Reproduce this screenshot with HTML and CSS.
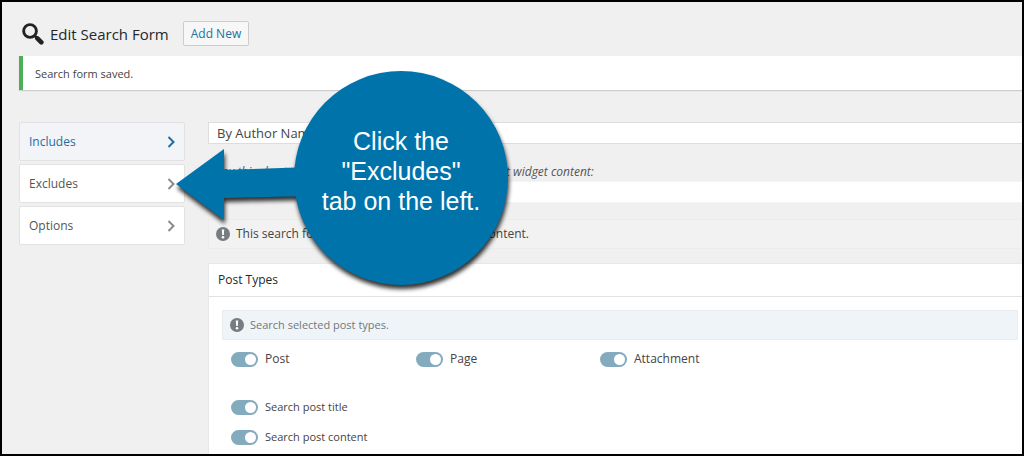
FILE: index.html
```html
<!DOCTYPE html>
<html lang="en">
<head>
<meta charset="utf-8">
<title>Edit Search Form</title>
<link rel="stylesheet" href="styles.css">
</head>
<body>
<div class="page">
  <header class="page-header">
    <svg class="logo" viewBox="0 0 20 20" aria-hidden="true"><circle cx="7.3" cy="7.3" r="5.8"/><path d="M11.500 11.500l2 2"/><path class="handle" d="M14 14l3.600 3.600"/></svg>
    <h1 class="title">Edit Search Form</h1>
    <button class="add-new" type="button">Add New</button>
  </header>
  <div class="notice" role="status">Search form saved.</div>
  <div class="layout">
    <nav class="tabs">
      <a class="tab tab-active" href="#includes">Includes <svg class="chevron" viewBox="0 0 8 12" aria-hidden="true"><path d="M1.5 1l5 5-5 5"/></svg></a>
      <a class="tab" href="#excludes">Excludes <svg class="chevron" viewBox="0 0 8 12" aria-hidden="true"><path d="M1.5 1l5 5-5 5"/></svg></a>
      <a class="tab" href="#options">Options <svg class="chevron" viewBox="0 0 8 12" aria-hidden="true"><path d="M1.5 1l5 5-5 5"/></svg></a>
    </nav>
    <main class="main">
      <input class="field" type="text" value="By Author Name" aria-label="Form name">
      <label class="hint" for="shortcode">Copy this shortcode and paste it into a post, page, or text widget content:</label>
      <div class="shortcode-row"><input class="field shortcode" id="shortcode" type="text" readonly></div>
      <p class="info">
        <svg class="alert" viewBox="0 0 14 14" aria-hidden="true"><circle cx="7" cy="7" r="7"/><path d="M5.8 2.5h2.4l-.4 5.4H6.2z"/><circle class="dot" cx="7" cy="10.3" r="1.3"/></svg>
        This search form searches only the selected content.
      </p>
      <section class="panel">
        <h2 class="panel-title">Post Types</h2>
        <div class="panel-body">
          <p class="info info-blue">
            <svg class="alert" viewBox="0 0 14 14" aria-hidden="true"><circle cx="7" cy="7" r="7"/><path d="M5.8 2.5h2.4l-.4 5.4H6.2z"/><circle class="dot" cx="7" cy="10.3" r="1.3"/></svg>
            Search selected post types.
          </p>
          <div class="types">
            <label class="option"><input class="toggle" type="checkbox" checked>Post</label>
            <label class="option"><input class="toggle" type="checkbox" checked>Page</label>
            <label class="option"><input class="toggle" type="checkbox" checked>Attachment</label>
          </div>
          <div class="extras">
            <label class="option"><input class="toggle" type="checkbox" checked>Search post title</label>
            <label class="option"><input class="toggle" type="checkbox" checked>Search post content</label>
          </div>
        </div>
      </section>
    </main>
  </div>
  <aside class="callout">
    <svg class="bubble" viewBox="0 0 340 216" aria-hidden="true"><path d="M6 114L54 79V100L140 97V126L54 128V150Z"/><circle cx="231" cy="108" r="107"/></svg>
    <p class="callout-text">Click the<br>"Excludes"<br>tab on the left.</p>
  </aside>
</div>
</body>
</html>
```
FILE: styles.css
```css
* { box-sizing: border-box; }
body {
  margin: 0;
  background: #f0f0f0;
  color: #444;
  font-family: "Open Sans", "Noto Sans", sans-serif;
  font-size: 12px;
  line-height: 16px;
}
h1, h2, p { margin: 0; }
.page {
  position: relative;
  display: flex;
  flex-direction: column;
  min-height: 100vh;
  border: 2px solid #000;
  overflow: hidden;
}
.page-header {
  display: flex;
  align-items: center;
  padding: 19px 20px 10px;
}
.logo {
  width: 22px;
  height: 22px;
  fill: none;
  stroke: #222;
  stroke-width: 2.600;
}
.logo .handle { stroke-width: 4.200; stroke-linecap: round; }
.title {
  margin-left: 6px;
  color: #23282d;
  font-size: 15px;
  font-weight: 400;
  line-height: 24px;
}
.add-new {
  height: 25px;
  margin-left: 14px;
  padding: 0 7px;
  border: 1px solid #ccc;
  border-radius: 2px;
  background: #f7f7f7;
  color: #2271a5;
  font: 500 12px/16px "Open Sans", "Noto Sans", sans-serif;
}
.notice {
  margin-left: 17px;
  padding: 10px 12px 8px;
  border-left: 4px solid #4caf58;
  background: #fff;
  box-shadow: 0 1px 1px #ccc;
  font-size: 11px;
}
.layout {
  display: flex;
  flex: 1;
  gap: 23px;
  margin-top: 32px;
  padding-left: 17px;
}
.tabs {
  display: flex;
  flex-direction: column;
  gap: 3px;
  width: 166px;
}
.tab {
  display: flex;
  align-items: center;
  justify-content: space-between;
  height: 39px;
  padding: 0 9px;
  border: 1px solid #e2e2e2;
  border-radius: 2px;
  background: #fff;
  color: #555;
  text-decoration: none;
}
.tab-active { background: #f2f4f7; color: #1c6ea4; }
.chevron {
  width: 8px;
  height: 12px;
  fill: none;
  stroke: #8a8a8a;
  stroke-width: 2;
}
.tab-active .chevron { stroke: #1c6ea4; }
.main {
  display: flex;
  flex: 1;
  flex-direction: column;
}
.field {
  width: 100%;
  height: 22px;
  padding: 0 8px;
  border: 1px solid #ddd;
  border-right: 0;
  background: #fff;
  color: #444;
  font: 13px/20px "Open Sans", "Noto Sans", sans-serif;
}
.hint {
  padding: 20px 0 1px;
  font-style: italic;
  color: #555;
}
.shortcode-row { display: flex; padding-left: 120px; }
.shortcode { border-color: #f4f4f4; }
.info {
  display: flex;
  align-items: center;
  gap: 6px;
  height: 30px;
  margin-top: 16px;
  padding: 0 7px;
  border: 1px solid #ececec;
  background: #f2f2f2;
}
.alert { width: 14px; height: 14px; fill: #777c80; }
.alert path, .alert .dot { fill: #fff; }
.panel {
  flex: 1;
  margin-top: 14px;
  border: 1px solid #e8e8e8;
  border-width: 1px 0 0 1px;
  background: #fff;
}
.panel-title {
  padding: 8px 9px;
  border-bottom: 1px solid #e2e2e2;
  color: #23282d;
  font-size: 12px;
  font-weight: 500;
  line-height: 16px;
}
.panel-body { padding: 13px 4px 0 13px; }
.info-blue {
  margin: 0;
  border-color: #e8eef0;
  background: #eff4f8;
  color: #72777c;
  font-size: 11px;
}
.types {
  display: grid;
  grid-template-columns: 185px 184px 1fr;
  padding: 11px 9px 0;
}
.extras {
  display: grid;
  gap: 14px;
  padding: 32px 9px 8px;
  font-size: 11px;
}
.option { display: flex; align-items: center; gap: 7px; }
.toggle {
  appearance: none;
  display: flex;
  justify-content: flex-end;
  width: 27px;
  height: 15px;
  margin: 0;
  padding: 2px;
  border-radius: 8px;
  background: #84abbd;
}
.toggle::before {
  content: "";
  width: 11px;
  height: 11px;
  border-radius: 50%;
  background: #fff;
}
.callout {
  position: absolute;
  top: 68px;
  left: 168px;
  width: 340px;
}
.bubble {
  display: block;
  width: 340px;
  height: 216px;
  fill: #0073aa;
  overflow: visible;
  filter: drop-shadow(1px 4px 2px rgba(0, 0, 0, 0.8));
}
.callout-text {
  position: absolute;
  top: 56px;
  left: 126px;
  width: 210px;
  color: #fff;
  font: 25px/30px "Liberation Sans", Arial, sans-serif;
  text-align: center;
}
```
